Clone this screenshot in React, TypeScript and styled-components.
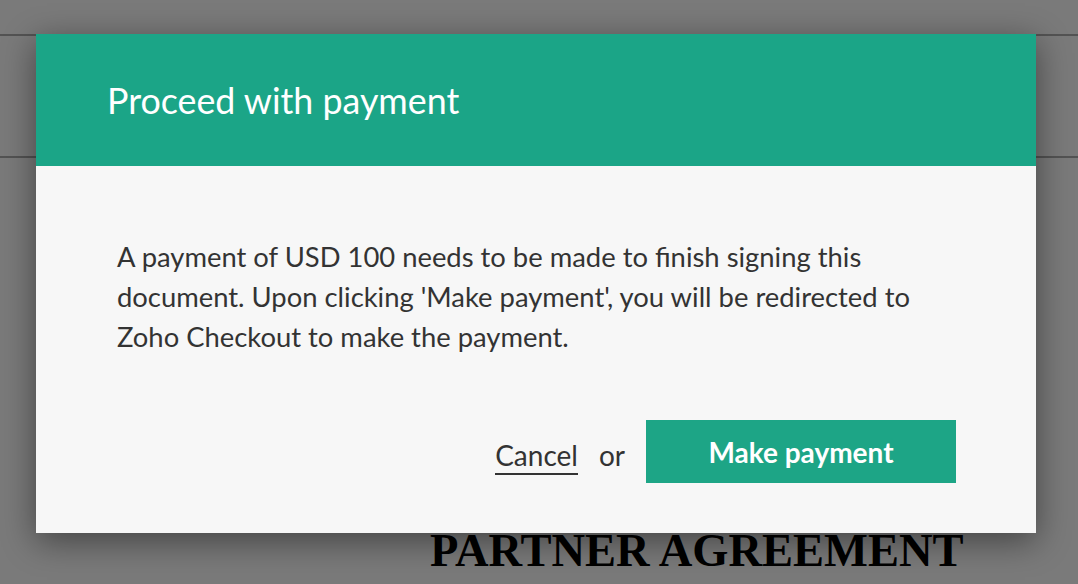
import styled, { createGlobalStyle } from 'styled-components';

const GlobalStyle = createGlobalStyle`
    html, body {
        margin: 0;
        padding: 0;
        width: 1078px;
        height: 584px;
        overflow: hidden;
        background: #ffffff;
    }
`;

const Page = styled.div`
    position: relative;
    width: 1078px;
    height: 584px;
    overflow: hidden;
    background: #ffffff;
`;

const TopStrip = styled.div`
    height: 34px;
    border-bottom: 2px solid #aeaeae;
`;

const Toolbar = styled.div`
    height: 120px;
    border-bottom: 2px solid #aeaeae;
`;

const Document = styled.div`
    padding: 370px 0 0 430px;
`;

const DocTitle = styled.h1`
    margin: 0;
    font-family: 'Liberation Serif', 'Times New Roman', serif;
    font-weight: 700;
    font-size: 46.5px;
    line-height: 1;
    color: #000;
    white-space: nowrap;
`;

const Overlay = styled.div`
    position: absolute;
    inset: 0;
    background: rgba(0, 0, 0, 0.52);
    padding: 34px 0 0 36px;
`;

const Dialog = styled.div`
    width: 1000px;
    background: #f7f7f7;
    box-shadow: 0 8px 32px rgba(0, 0, 0, 0.45);
    font-family: Lato, 'Open Sans', sans-serif;
`;

const DialogHeader = styled.div`
    height: 132px;
    display: flex;
    align-items: center;
    padding: 0 71px;
    background: #1ba587;
`;

const Title = styled.h2`
    margin: 0;
    font-size: 35.8px;
    font-weight: 400;
    color: #ffffff;
`;

const DialogBody = styled.div`
    padding: 71px 80px 50px 81px;
`;

const Message = styled.p`
    margin: 0;
    font-size: 27.4px;
    line-height: 40px;
    color: #333333;
`;

const Footer = styled.div`
    display: flex;
    justify-content: flex-end;
    align-items: center;
    gap: 21px;
    margin-top: 63px;
`;

const Secondary = styled.div`
    display: flex;
    align-items: baseline;
    gap: 21px;
    margin-top: 11px;
    font-size: 28px;
    line-height: 1.2;
    color: #333333;
`;

const CancelLink = styled.a`
    color: #333333;
    text-decoration: none;
    border-bottom: 2px solid #333333;
    cursor: pointer;
`;

const PrimaryButton = styled.button`
    width: 310px;
    height: 63px;
    border: none;
    background: #1da586;
    color: #ffffff;
    font-family: Lato, 'Open Sans', sans-serif;
    font-size: 28px;
    font-weight: 700;
    cursor: pointer;
`;

export default function App() {
    return (
        <Page>
            <GlobalStyle />
            <TopStrip />
            <Toolbar />
            <Document>
                <DocTitle>PARTNER AGREEMENT</DocTitle>
            </Document>
            <Overlay>
                <Dialog>
                    <DialogHeader>
                        <Title>Proceed with payment</Title>
                    </DialogHeader>
                    <DialogBody>
                        <Message>
                            A payment of USD 100 needs to be made to finish signing this document. Upon
                            clicking 'Make payment', you will be redirected to Zoho Checkout to make the
                            payment.
                        </Message>
                        <Footer>
                            <Secondary>
                                <CancelLink>Cancel</CancelLink>
                                <span>or</span>
                            </Secondary>
                            <PrimaryButton>Make payment</PrimaryButton>
                        </Footer>
                    </DialogBody>
                </Dialog>
            </Overlay>
        </Page>
    );
}
